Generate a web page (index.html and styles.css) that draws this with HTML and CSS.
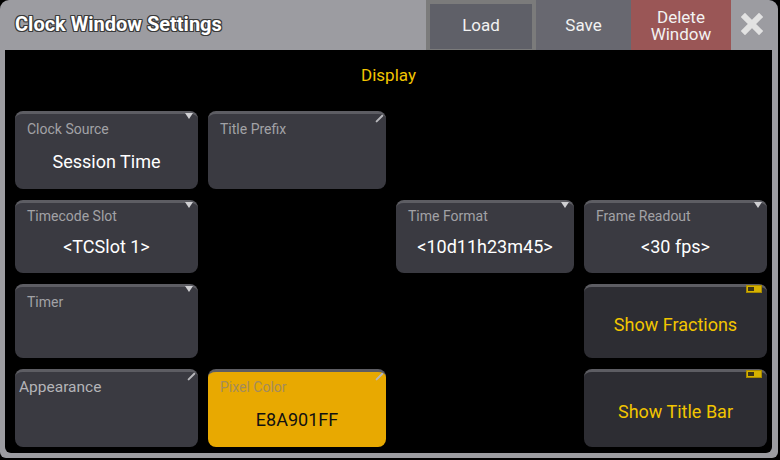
FILE: index.html
```html
<!DOCTYPE html>
<html lang="en">
<head>
  <meta charset="UTF-8">
  <title>Clock Window Settings</title>
  <link rel="stylesheet" href="styles.css">
</head>
<body>

  <div class="ventana">
    <!-- Barra de título -->
    <div class="cabecera">
      <div class="titulo">Clock Window Settings</div>
      <div class="botones">
        <div class="boton cargar">Load</div>
        <div class="boton guardar">Save</div>
        <div class="boton borrar">Delete<br>Window</div>
        <div class="cerrar">
          <svg width="22" height="22" viewBox="0 0 22 22">
            <path d="M4 4 L18 18 M18 4 L4 18" stroke="#e2e2e2" stroke-width="6" stroke-linecap="square"/>
          </svg>
        </div>
      </div>
    </div>

    <!-- Contenido -->
    <div class="contenido">
      <div class="seccion">Display</div>

      <div class="rejilla">
        <div class="tarjeta c1 f1">
          <span class="flecha"></span>
          <div class="etiqueta">Clock Source</div>
          <div class="valor">Session Time</div>
        </div>
        <div class="tarjeta c2 f1">
          <span class="lapiz"></span>
          <div class="etiqueta">Title Prefix</div>
        </div>

        <div class="tarjeta c1 f2">
          <span class="flecha"></span>
          <div class="etiqueta">Timecode Slot</div>
          <div class="valor">&lt;TCSlot 1&gt;</div>
        </div>
        <div class="tarjeta c3 f2">
          <span class="flecha"></span>
          <div class="etiqueta">Time Format</div>
          <div class="valor">&lt;10d11h23m45&gt;</div>
        </div>
        <div class="tarjeta c4 f2">
          <span class="flecha"></span>
          <div class="etiqueta">Frame Readout</div>
          <div class="valor">&lt;30 fps&gt;</div>
        </div>

        <div class="tarjeta c1 f3">
          <span class="flecha"></span>
          <div class="etiqueta">Timer</div>
        </div>
        <div class="tarjeta interruptor c4 f3">
          <span class="palanca"></span>
          Show Fractions
        </div>

        <div class="tarjeta c1 f4">
          <span class="lapiz"></span>
          <div class="etiqueta grande">Appearance</div>
        </div>
        <div class="tarjeta color c2 f4">
          <span class="lapiz"></span>
          <div class="etiqueta">Pixel Color</div>
          <div class="valor">E8A901FF</div>
        </div>
        <div class="tarjeta interruptor c4 f4">
          <span class="palanca"></span>
          Show Title Bar
        </div>
      </div>
    </div>
  </div>

</body>
</html>
```

FILE: styles.css
```css
* {
  box-sizing: border-box;
}

body {
  margin: 0;
  background-color: #000;
  font-family: Roboto, "Liberation Sans", sans-serif;
}

.ventana {
  width: 778px;
  height: 458px;
  background-color: #9c9ca1;
  border-radius: 9px 9px 6px 6px;
  padding: 0 6px 5px 5px;
  display: flex;
  flex-direction: column;
}

.cabecera {
  height: 50px;
  display: flex;
  align-items: flex-start;
  justify-content: space-between;
  flex-shrink: 0;
}

.titulo {
  color: #fff;
  font-size: 20px;
  font-weight: bold;
  margin: 12px 0 0 10px;
  text-shadow: -1px -1px 0 #3a3a3a, 1px -1px 0 #3a3a3a, -1px 1px 0 #3a3a3a, 1px 1px 0 #3a3a3a,
               0 -1px 0 #3a3a3a, 0 1px 0 #3a3a3a, -1px 0 0 #3a3a3a, 1px 0 0 #3a3a3a;
}

.botones {
  display: flex;
  align-items: flex-start;
}

.boton {
  height: 50px;
  color: #f2f2f2;
  font-size: 17px;
  display: flex;
  align-items: center;
  justify-content: center;
  text-align: center;
  line-height: 17px;
}

.cargar {
  width: 110px;
  height: 53px;
  background-color: #5f6068;
  border: 4px solid #7b7b7b;
  padding-bottom: 3px;
}

.guardar {
  width: 95px;
  background-color: #686870;
}

.borrar {
  width: 100px;
  background-color: #9a5656;
  padding-top: 1px;
}

.cerrar {
  width: 41px;
  height: 50px;
  display: flex;
  align-items: center;
  justify-content: center;
  padding-bottom: 3px;
}

.contenido {
  flex: 1;
  background-color: #000;
  border-radius: 0 0 6px 6px;
  padding: 0 0 0 10px;
}

.seccion {
  height: 61px;
  color: #f2c500;
  font-size: 17px;
  text-align: center;
  padding-top: 15px;
  padding-right: 10px;
}

.rejilla {
  display: grid;
  grid-template-columns: 183px 178px 178px 183px;
  grid-template-rows: 78px 73px 74px 78px;
  column-gap: 10px;
  row-gap: 11px;
}

.c1 { grid-column: 1; }
.c2 { grid-column: 2; }
.c3 { grid-column: 3; }
.c4 { grid-column: 4; }
.f1 { grid-row: 1; }
.f2 { grid-row: 2; }
.f3 { grid-row: 3; }
.f4 { grid-row: 4; }

.tarjeta {
  position: relative;
  background-color: #3a3a41;
  border-top: 3px solid #5d5d63;
  border-radius: 8px;
  padding: 6px 12px 0 12px;
}

.etiqueta {
  color: #a2a2a6;
  font-size: 14px;
  line-height: 18px;
}

.etiqueta.grande {
  font-size: 15.5px;
  margin-left: -8px;
  color: #b4b4b8;
}

.valor {
  color: #fff;
  font-size: 18px;
  line-height: 22px;
  text-align: center;
  margin-top: 13px;
  margin-left: -12px;
  margin-right: -12px;
}

.f2 .valor {
  margin-top: 11px;
}

.f2 .etiqueta {
  margin-top: -2px;
}

.flecha {
  position: absolute;
  right: 5px;
  top: -1px;
  width: 0;
  height: 0;
  border-left: 4px solid transparent;
  border-right: 4px solid transparent;
  border-top: 6px solid #cfcfd2;
}

.lapiz {
  position: absolute;
  right: 3px;
  top: 0;
  width: 10px;
  height: 2px;
  background-color: #b8b8bc;
  transform: rotate(-45deg);
  transform-origin: right center;
  border-radius: 1px;
}

.color {
  background-color: #e8a901;
}

.color .etiqueta {
  color: #a48c5c;
}

.color .valor {
  color: #111;
}

.interruptor {
  background-color: #2d2d33;
  color: #f2c500;
  font-size: 18px;
  display: flex;
  align-items: center;
  justify-content: center;
  padding: 3px 0 0 0;
}

.palanca {
  position: absolute;
  right: 5px;
  top: -2px;
  width: 16px;
  height: 8px;
  background-color: #d6b200;
  border: 1px solid #a88a00;
}

.palanca::before {
  content: "";
  position: absolute;
  left: 1px;
  top: 1px;
  width: 6px;
  height: 4px;
  background-color: #3d3518;
}
```
